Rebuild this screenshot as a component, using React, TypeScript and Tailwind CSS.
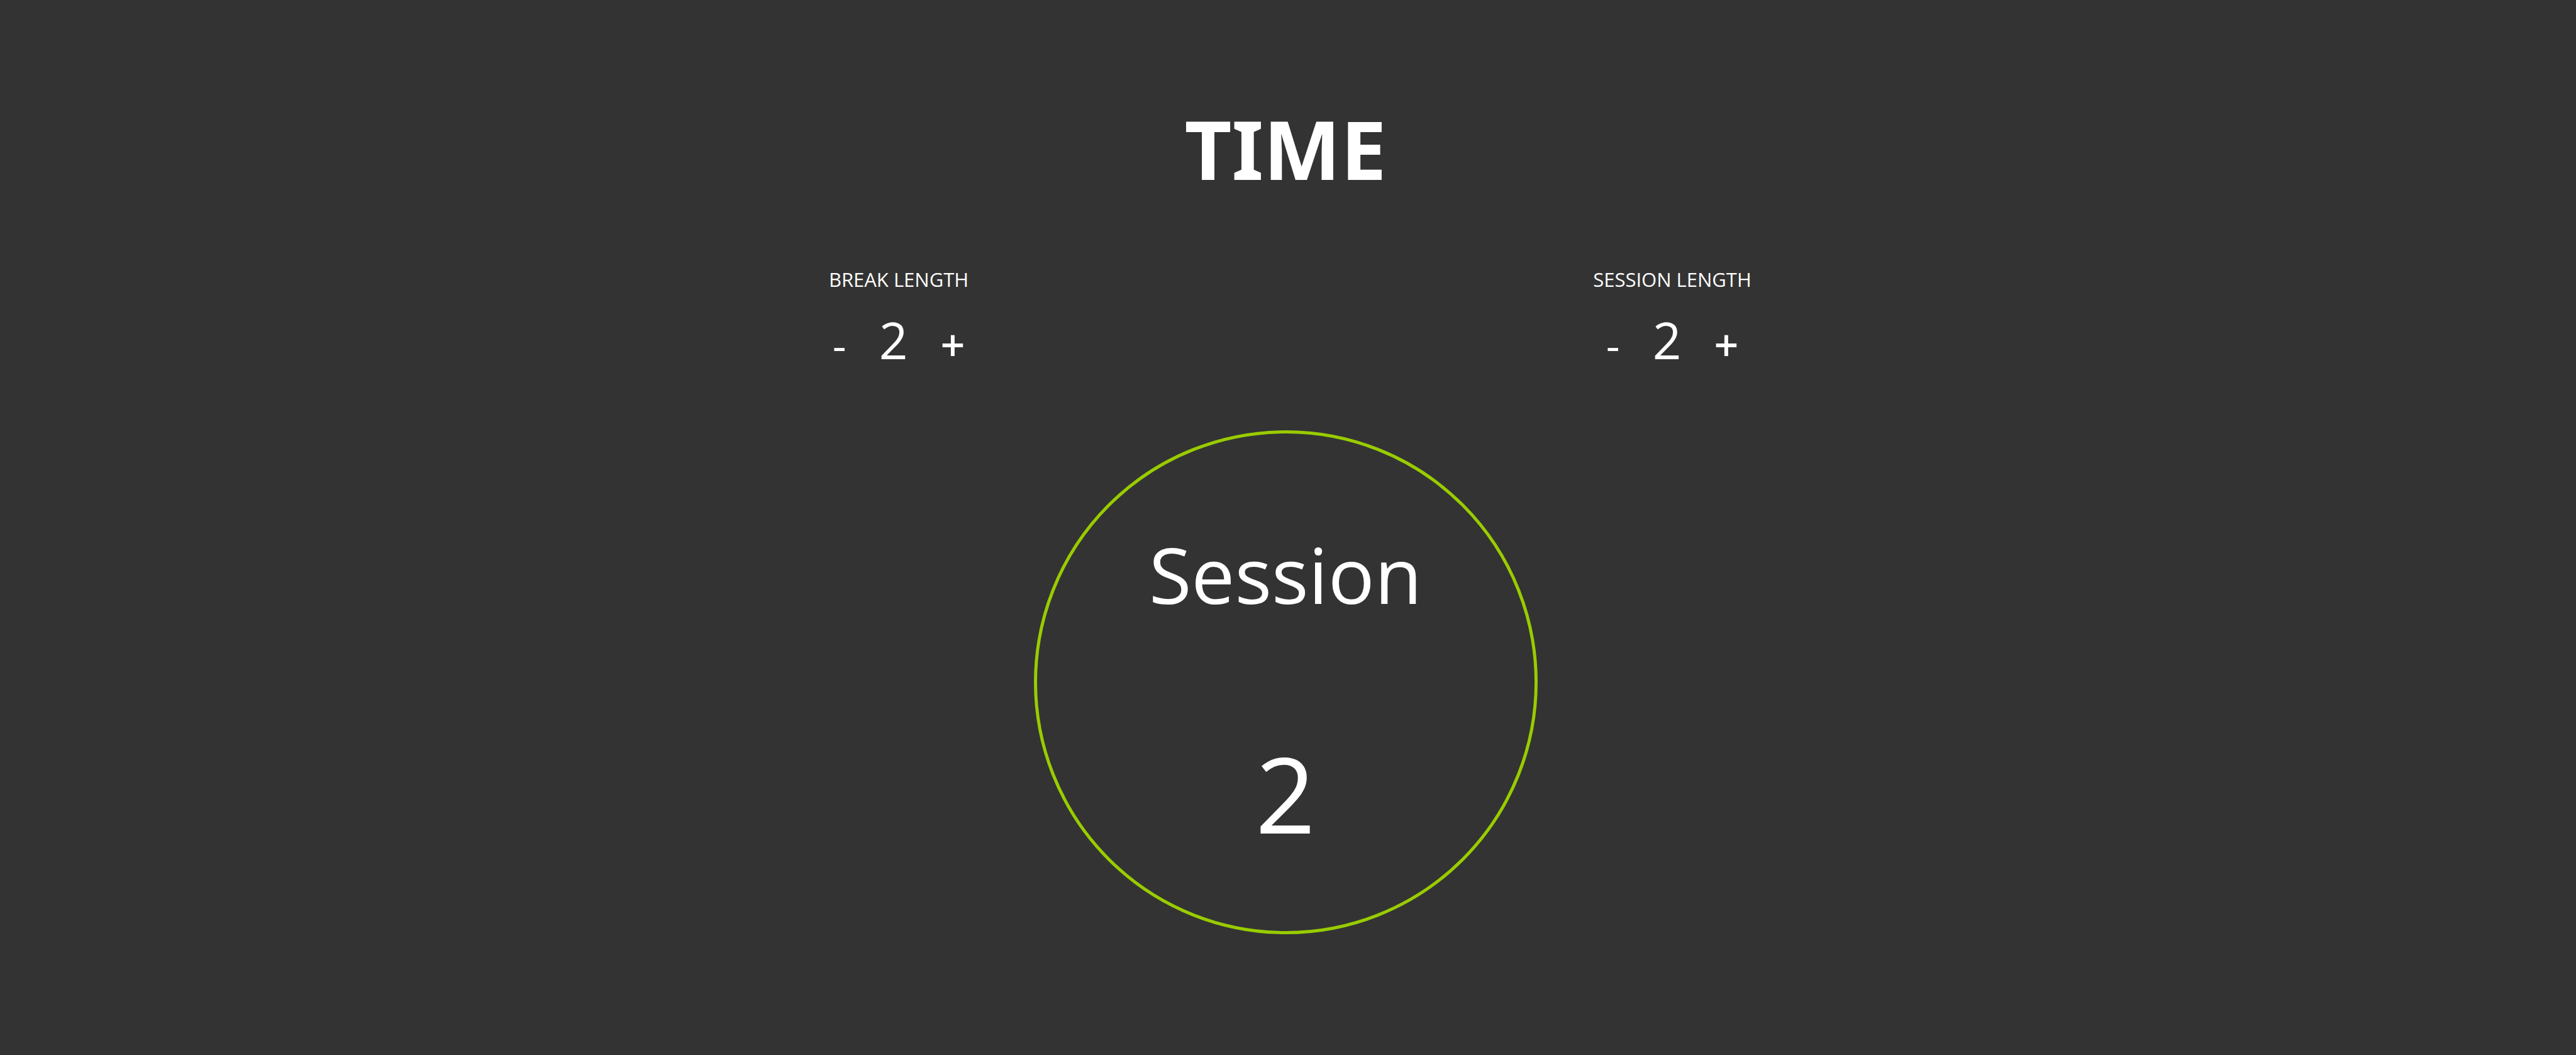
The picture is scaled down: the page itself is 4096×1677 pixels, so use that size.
import { useState } from "react";

type LengthControlProps = {
  label: string;
  value: number;
  onChange: (value: number) => void;
};

function LengthControl({ label, value, onChange }: LengthControlProps) {
  return (
    <div role="group" aria-label={label} className="flex flex-col items-center gap-[18px]">
      <h2 className="text-[31px] leading-[44px]">{label}</h2>
      <div className="flex items-end gap-[52px]">
        <button
          type="button"
          aria-label={`Decrease ${label.toLowerCase()}`}
          onClick={() => onChange(Math.max(1, value - 1))}
          className="cursor-pointer text-[68px] leading-[96px]"
        >
          -
        </button>
        <span className="text-[80px] leading-[112px]">{value}</span>
        <button
          type="button"
          aria-label={`Increase ${label.toLowerCase()}`}
          onClick={() => onChange(value + 1)}
          className="cursor-pointer text-[68px] leading-[96px] font-semibold"
        >
          +
        </button>
      </div>
    </div>
  );
}

export default function App() {
  const [breakLength, setBreakLength] = useState(2);
  const [sessionLength, setSessionLength] = useState(2);
  const [onBreak, setOnBreak] = useState(false);

  return (
    <main className="flex min-h-screen flex-col items-center bg-[#333333] pt-[146px] pr-2 pb-20 font-['Open_Sans',sans-serif] text-white">
      <h1 className="font-['Noto_Sans',sans-serif] text-[130px] leading-[180px] font-bold">TIME</h1>

      <section className="mt-24 grid w-full max-w-[2460px] grid-cols-2">
        <LengthControl label="BREAK LENGTH" value={breakLength} onChange={setBreakLength} />
        <LengthControl label="SESSION LENGTH" value={sessionLength} onChange={setSessionLength} />
      </section>

      <button
        type="button"
        onClick={() => setOnBreak(!onBreak)}
        className="mt-[88px] flex size-[801px] cursor-pointer flex-col items-center gap-36 rounded-full border-5 border-[#99cc00] pt-[136px]"
      >
        <span className="text-[123px] leading-[176px]">{onBreak ? "Break" : "Session"}</span>
        <span className="text-[167px] leading-[232px]">{onBreak ? breakLength : sessionLength}</span>
      </button>
    </main>
  );
}
